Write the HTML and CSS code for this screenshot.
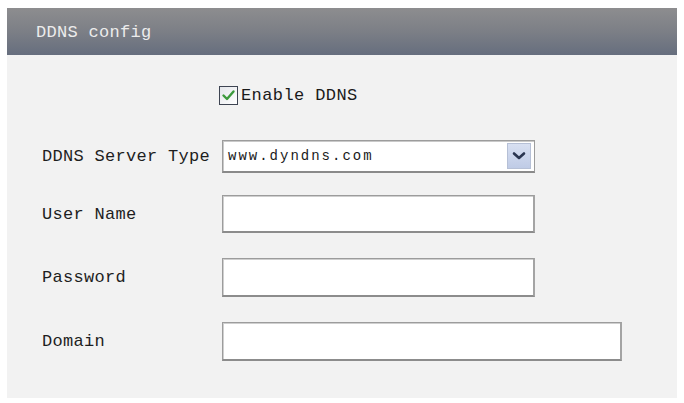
FILE: index.html
```html
<!DOCTYPE html>
<html>
<head>
<meta charset="utf-8">
<link rel="stylesheet" href="styles.css">
</head>
<body>
<div class="panel">
  <div class="panel-head">DDNS config</div>
  <div class="panel-body">
    <div class="row row-check">
      <div class="label"></div>
      <label class="check-row">
        <span class="checkbox">
          <svg width="15" height="15" viewBox="0 0 15 15"><path d="M2.5 7.5 L6 11 L12.5 3.5" fill="none" stroke="#3c9a3c" stroke-width="2.4" stroke-linecap="round" stroke-linejoin="round"/></svg>
        </span>
        <span class="check-label">Enable DDNS</span>
      </label>
    </div>

    <div class="row row-select">
      <div class="label">DDNS Server Type</div>
      <div class="select">
        <span class="select-text">www.dyndns.com</span>
        <span class="select-btn">
          <svg width="14" height="10" viewBox="0 0 14 10"><path d="M2 2.5 L7 7 L12 2.5" fill="none" stroke="#2a3550" stroke-width="2.6" stroke-linecap="round" stroke-linejoin="round"/></svg>
        </span>
      </div>
    </div>

    <div class="row row-user">
      <div class="label">User Name</div>
      <input class="field" type="text">
    </div>

    <div class="row row-pass">
      <div class="label">Password</div>
      <input class="field field-tall" type="password">
    </div>

    <div class="row row-domain">
      <div class="label">Domain</div>
      <input class="field field-tall field-wide" type="text">
    </div>
  </div>
</div>
</body>
</html>
```

FILE: styles.css
```css
html, body {
  margin: 0;
  padding: 0;
  background: #ffffff;
}

body {
  font-family: "Liberation Mono", "DejaVu Sans Mono", monospace;
  color: #1e1e1e;
}

.panel {
  margin: 8px 7px 0 7px;
  width: 670px;
}

.panel-head {
  height: 47px;
  box-sizing: border-box;
  padding: 2px 0 0 29px;
  display: flex;
  align-items: center;
  background: linear-gradient(to bottom, #8d8d8f 0%, #7c7f86 50%, #666e7e 100%);
  color: #ececec;
  font-size: 17px;
  letter-spacing: 0.3px;
}

.panel-body {
  background: #f2f2f2;
  height: 343px;
  box-sizing: border-box;
  padding: 31px 0 0 35px;
  display: flex;
  flex-direction: column;
}

.row {
  display: flex;
  align-items: center;
}

.row-select { margin-top: 35px; }
.row-user { margin-top: 22px; }
.row-pass { margin-top: 25px; }
.row-domain { margin-top: 25px; }

.label {
  width: 180px;
  flex: none;
  font-size: 17px;
  letter-spacing: 0.3px;
  color: #1e1e1e;
}

.check-row {
  display: flex;
  align-items: center;
  margin-left: -3px;
  gap: 3px;
}

.checkbox {
  width: 17px;
  height: 17px;
  border: 1px solid #3e4452;
  background: linear-gradient(to bottom right, #e4e6ea, #ffffff);
  display: flex;
  align-items: center;
  justify-content: center;
}

.check-label {
  font-size: 17px;
  letter-spacing: 0.4px;
  color: #1a1a1a;
}

.select {
  width: 313px;
  height: 33px;
  box-sizing: border-box;
  border: 1px solid #9c9c9c;
  border-bottom: 2px solid #8a8a8a;
  box-shadow: inset 1px 1px 0 #c9c9c9;
  background: #ffffff;
  display: flex;
  align-items: center;
  padding: 0 3px 0 5px;
}

.select-text {
  font-size: 14px;
  letter-spacing: 2px;
  color: #1a1a1a;
}

.select-btn {
  margin-left: auto;
  width: 24px;
  height: 26px;
  box-sizing: border-box;
  border: 1px solid #b6c0d6;
  background: linear-gradient(to bottom, #d8e0f2, #bfcbe6);
  display: flex;
  align-items: center;
  justify-content: center;
}

.field {
  display: block;
  width: 313px;
  height: 38px;
  box-sizing: border-box;
  margin: 0;
  border: 1px solid #9c9c9c;
  border-bottom: 2px solid #8c8c8c;
  border-right: 2px solid #a4a4a4;
  box-shadow: inset 1px 1px 0 #cfcfcf;
  background: #ffffff;
  outline: none;
  padding: 0 4px;
}

.field-tall { height: 39px; }

.field-wide { width: 400px; }
```
